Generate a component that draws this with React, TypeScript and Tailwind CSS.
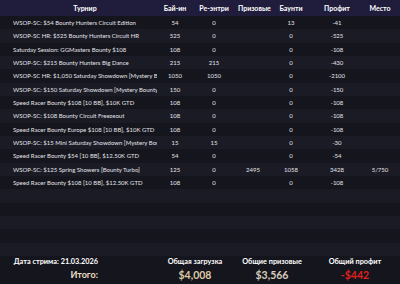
import React from 'react';

type Row = {
  name: string;
  buyin: string;
  reentry: string;
  prize: string;
  bounty: string;
  profit: string;
  place: string;
};

const rows: Row[] = [
  { name: 'WSOP-SC: $54 Bounty Hunters Circuit Edition', buyin: '54', reentry: '0', prize: '', bounty: '13', profit: '-41', place: '' },
  { name: 'WSOP-SC HR: $525 Bounty Hunters Circuit HR', buyin: '525', reentry: '0', prize: '', bounty: '0', profit: '-525', place: '' },
  { name: 'Saturday Session: GGMasters Bounty $108', buyin: '108', reentry: '0', prize: '', bounty: '0', profit: '-108', place: '' },
  { name: 'WSOP-SC: $215 Bounty Hunters Big Dance', buyin: '215', reentry: '215', prize: '', bounty: '0', profit: '-430', place: '' },
  { name: 'WSOP-SC HR: $1,050 Saturday Showdown [Mystery Bounty]', buyin: '1050', reentry: '1050', prize: '', bounty: '0', profit: '-2100', place: '' },
  { name: 'WSOP-SC: $150 Saturday Showdown [Mystery Bounty]', buyin: '150', reentry: '0', prize: '', bounty: '0', profit: '-150', place: '' },
  { name: 'Speed Racer Bounty $108 [10 BB], $10K GTD', buyin: '108', reentry: '0', prize: '', bounty: '0', profit: '-108', place: '' },
  { name: 'WSOP-SC: $108 Bounty Circuit Freezeout', buyin: '108', reentry: '0', prize: '', bounty: '0', profit: '-108', place: '' },
  { name: 'Speed Racer Bounty Europe $108 [10 BB], $10K GTD', buyin: '108', reentry: '0', prize: '', bounty: '0', profit: '-108', place: '' },
  { name: 'WSOP-SC: $15 Mini Saturday Showdown [Mystery Bounty]', buyin: '15', reentry: '15', prize: '', bounty: '0', profit: '-30', place: '' },
  { name: 'Speed Racer Bounty $54 [10 BB], $12.50K GTD', buyin: '54', reentry: '0', prize: '', bounty: '0', profit: '-54', place: '' },
  { name: 'WSOP-SC: $125 Spring Showers [Bounty Turbo]', buyin: '125', reentry: '0', prize: '2495', bounty: '1058', profit: '3428', place: '5/750' },
  { name: 'Speed Racer Bounty $108 [10 BB], $12.50K GTD', buyin: '108', reentry: '0', prize: '', bounty: '0', profit: '-108', place: '' },
];

const cols = 'grid grid-cols-[150px_30px_48px_30px_46px_46px_40px] pl-[10px]';

export default function App() {
  const filler = Array.from({ length: 5 });

  return (
    <div className="w-[400px] h-[284px] overflow-hidden bg-[#15151e] text-[#e4e4e8] font-['Lato',sans-serif]">
      <div className={`${cols} h-[16px] items-center bg-[#1f1c3c] text-white text-[7px] font-bold`}>
        <div className="text-center">Турнир</div>
        <div className="text-center">Бай-ин</div>
        <div className="text-center">Ре-энтри</div>
        <div className="text-center whitespace-nowrap">Призовые</div>
        <div className="text-center">Баунти</div>
        <div className="text-center">Профит</div>
        <div className="text-center">Место</div>
      </div>

      {rows.map((r, i) => (
        <div
          key={i}
          className={`${cols} h-[13.333px] items-center text-[6px] ${i % 2 ? 'bg-[#1b1b26]' : 'bg-[#15151e]'}`}
        >
          <div className="ml-[3px] w-[144px] overflow-hidden whitespace-nowrap">{r.name}</div>
          <div className="text-center">{r.buyin}</div>
          <div className="text-center">{r.reentry}</div>
          <div className="text-center">{r.prize}</div>
          <div className="text-center">{r.bounty}</div>
          <div className="text-center">{r.profit}</div>
          <div className="text-center">{r.place}</div>
        </div>
      ))}

      {filler.map((_, i) => (
        <div key={i} className={`h-[13.333px] ${(i + rows.length) % 2 ? 'bg-[#1b1b26]' : 'bg-[#15151e]'}`} />
      ))}

      <div className="flex">
        <div className="w-[98px] text-right font-bold">
          <div className="text-[7.3px] text-white leading-[12px] whitespace-nowrap">Дата стрима: 21.03.2026</div>
          <div className="text-[9px] text-[#e9dfc4] leading-[14px]">Итого:</div>
        </div>
        <div className="ml-[52px] w-[90px] text-center font-bold">
          <div className="text-[7.3px] text-white leading-[12px]">Общая загрузка</div>
          <div className="text-[10.5px] text-[#dccaa3] leading-[14px]">$4,008</div>
        </div>
        <div className="w-[64px] text-center font-bold">
          <div className="text-[7.3px] text-white leading-[12px] whitespace-nowrap">Общие призовые</div>
          <div className="text-[10.5px] text-[#d6cdbb] leading-[14px]">$3,566</div>
        </div>
        <div className="ml-[16px] w-[70px] text-center font-bold">
          <div className="text-[7.3px] text-white leading-[12px]">Общий профит</div>
          <div className="text-[10.5px] text-[#e0201c] leading-[14px]">-$442</div>
        </div>
      </div>
    </div>
  );
}
